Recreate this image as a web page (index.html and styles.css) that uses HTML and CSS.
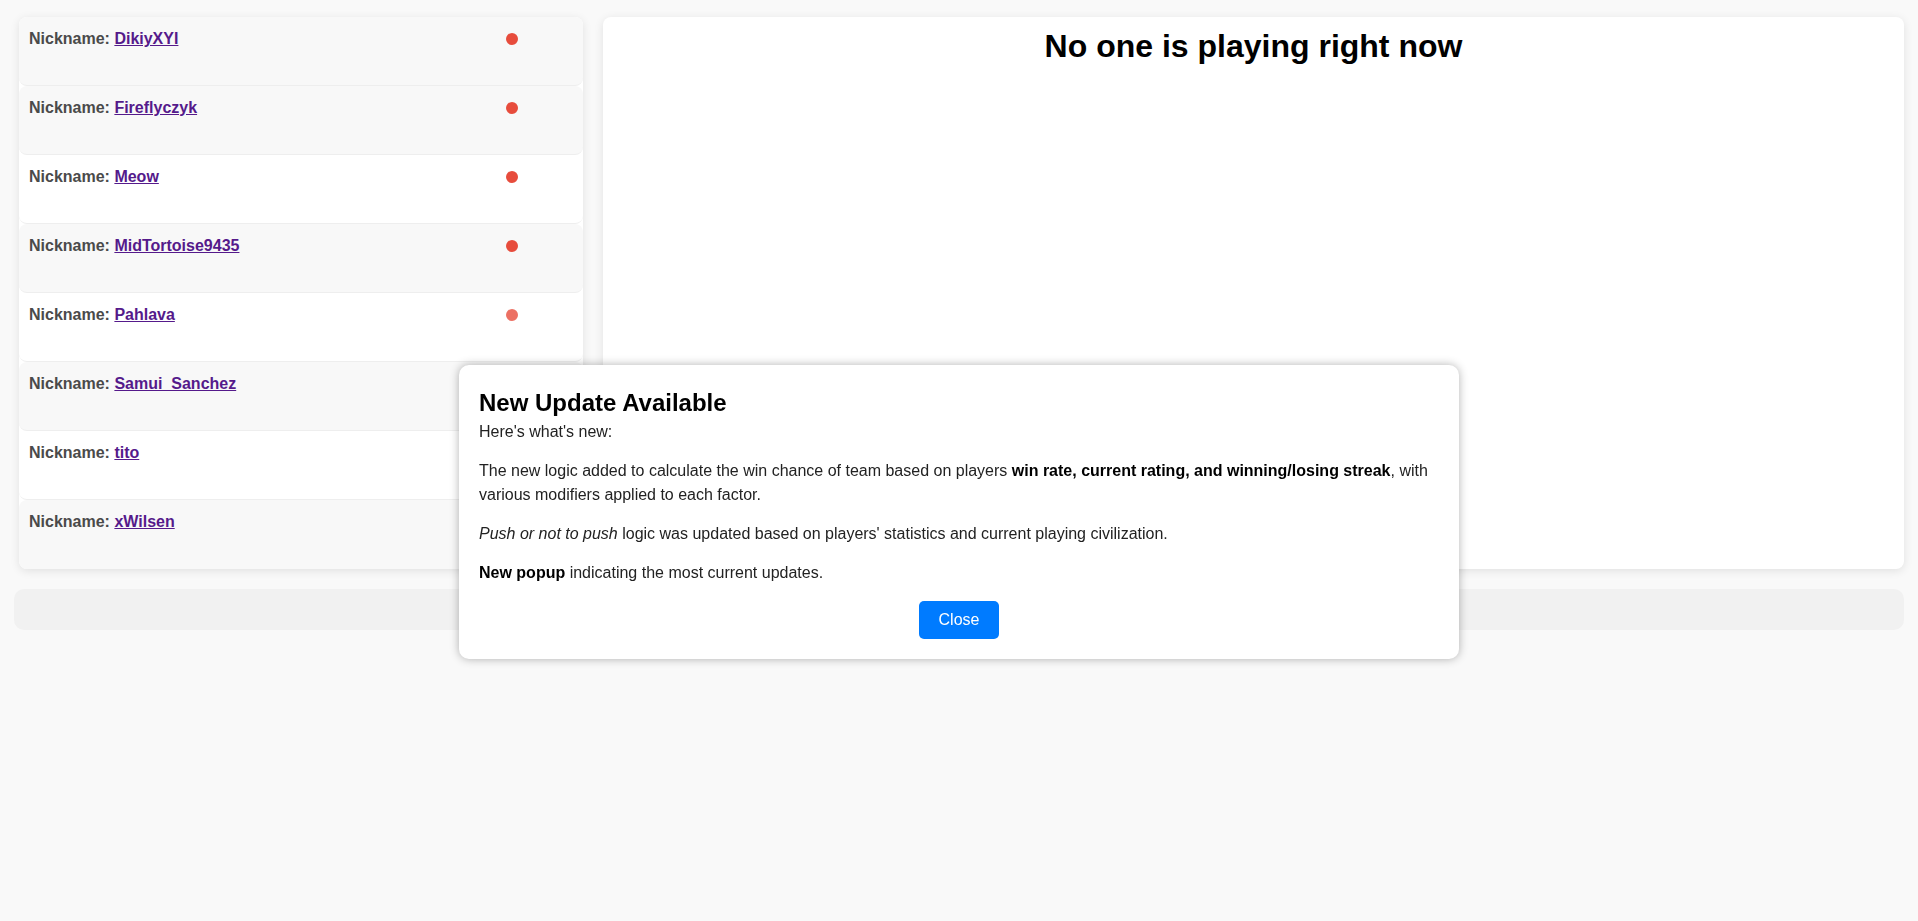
FILE: index.html
```html
<!DOCTYPE html>
<html lang="en">
<head>
<meta charset="utf-8">
<title>Players</title>
<link rel="stylesheet" href="styles.css">
</head>
<body>
<div class="page">
  <div class="top">
    <div class="players">
      <div class="row alt"><div class="name"><span class="label">Nickname:</span> <a href="#">DikiyXYI</a></div><span class="dot"></span></div>
      <div class="row alt"><div class="name"><span class="label">Nickname:</span> <a href="#">Fireflyczyk</a></div><span class="dot"></span></div>
      <div class="row"><div class="name"><span class="label">Nickname:</span> <a href="#">Meow</a></div><span class="dot"></span></div>
      <div class="row alt"><div class="name"><span class="label">Nickname:</span> <a href="#">MidTortoise9435</a></div><span class="dot"></span></div>
      <div class="row"><div class="name"><span class="label">Nickname:</span> <a href="#">Pahlava</a></div><span class="dot faded"></span></div>
      <div class="row alt"><div class="name"><span class="label">Nickname:</span> <a href="#">Samui_Sanchez</a></div><span class="dot"></span></div>
      <div class="row"><div class="name"><span class="label">Nickname:</span> <a href="#">tito</a></div><span class="dot"></span></div>
      <div class="row alt"><div class="name"><span class="label">Nickname:</span> <a href="#">xWilsen</a></div><span class="dot"></span></div>
    </div>
    <div class="game">
      <h1 class="game-title">No one is playing right now</h1>
    </div>
  </div>
  <div class="footer-bar"></div>
</div>

<div class="modal">
  <h2 class="modal-title">New Update Available</h2>
  <div class="modal-lead">Here's what's new:</div>
  <p class="modal-p">The new logic added to calculate the win chance of team based on players <b>win rate, current rating, and winning/losing streak</b>, with various modifiers applied to each factor.</p>
  <p class="modal-p"><i>Push or not to push</i> logic was updated based on players' statistics and current playing civilization.</p>
  <p class="modal-p"><b>New popup</b> indicating the most current updates.</p>
  <div class="modal-actions"><button class="close-btn" type="button">Close</button></div>
</div>
</body>
</html>
```

FILE: styles.css
```css
html, body {
  margin: 0;
  padding: 0;
}
body {
  background: #f9f9f9;
  font-family: "Liberation Sans", Arial, sans-serif;
  font-size: 16px;
  color: #333;
}
.page {
  padding: 17px 14px 0 14px;
}
.top {
  display: flex;
  gap: 20px;
  padding-left: 5px;
  align-items: stretch;
}
.players {
  width: 564px;
  flex: 0 0 564px;
  background: #ffffff;
  border-radius: 8px;
  box-shadow: 0 2px 10px rgba(0, 0, 0, 0.1);
  display: flex;
  flex-direction: column;
}
.row {
  display: flex;
  align-items: flex-start;
  padding: 10px;
  height: 48px;
  background: #ffffff;
  border-radius: 8px;
  border-bottom: 1px solid #eeeeee;
  line-height: 24px;
}
.row:last-child {
  border-bottom: 0;
  height: 49px;
}
.row.alt {
  background: #f8f8f8;
}
.name {
  flex: 1;
  font-weight: bold;
  color: #4a4a4a;
}
.name a {
  color: #551a8b;
  text-decoration: underline;
}
.dot {
  width: 12px;
  height: 12px;
  border-radius: 50%;
  background: #e74c3c;
  margin-top: 6px;
  margin-right: 55px;
  flex: 0 0 12px;
}
.dot.faded {
  opacity: 0.8;
}
.game {
  flex: 1;
  min-height: 552px;
  background: #ffffff;
  border-radius: 8px;
  box-shadow: 0 2px 10px rgba(0, 0, 0, 0.1);
  padding-top: 11px;
  box-sizing: border-box;
}
.game-title {
  margin: 0;
  text-align: center;
  font-size: 32px;
  font-weight: bold;
  color: #000;
  line-height: normal;
}
.footer-bar {
  margin-top: 20px;
  height: 41px;
  background: #f1f1f1;
  border-radius: 10px;
}
.modal {
  position: fixed;
  top: 365px;
  left: 50%;
  transform: translateX(-50%);
  width: 1000px;
  box-sizing: border-box;
  padding: 20px;
  background: #ffffff;
  border-radius: 10px;
  box-shadow: 0 0 10px rgba(0, 0, 0, 0.3);
  line-height: 1.5;
  color: #222;
}
.modal-title {
  margin: 0;
  font-size: 24px;
  font-weight: bold;
  color: #000;
  line-height: 35px;
}
.modal-lead {
  margin: 0;
}
.modal-p {
  margin: 15px 0;
}
.modal-p b {
  color: #000;
}
.modal-actions {
  display: flex;
  justify-content: center;
  padding-top: 1px;
}
.close-btn {
  font-family: "Liberation Sans", Arial, sans-serif;
  font-size: 16px;
  line-height: 18px;
  padding: 10px 20px;
  border: 0;
  border-radius: 5px;
  background: #007bff;
  color: #ffffff;
  cursor: pointer;
}
```
